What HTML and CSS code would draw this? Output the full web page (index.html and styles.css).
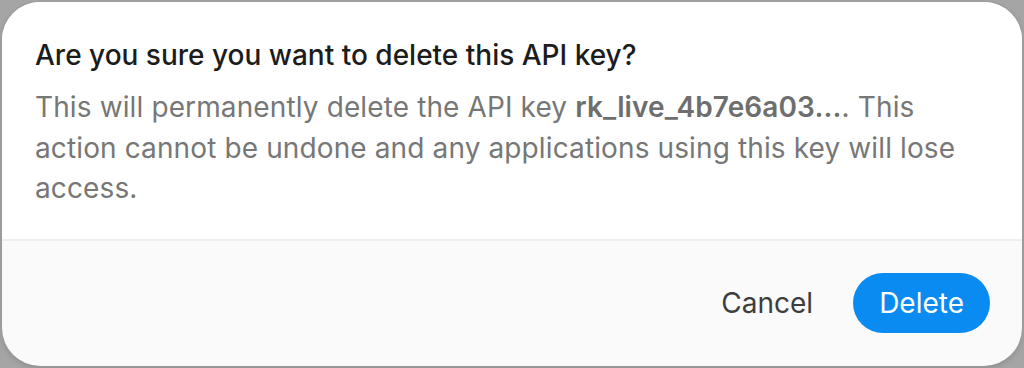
FILE: index.html
```html
<!DOCTYPE html>
<html lang="en">
<head>
    <meta charset="UTF-8">
    <meta name="viewport" content="width=device-width, initial-scale=1.0">
    <title>Delete API key</title>
    <link rel="stylesheet" href="styles.css">
</head>
<body>
    <div class="dialog" role="alertdialog" aria-labelledby="dialog-title">
        <div class="dialog-body">
            <h2 id="dialog-title">Are you sure you want to delete this API key?</h2>
            <p class="dialog-text">This will permanently delete the API key <strong>rk_live_4b7e6a03...</strong>. This action cannot be undone and any applications using this key will lose access.</p>
        </div>
        <div class="dialog-footer">
            <button class="btn btn-cancel" type="button">Cancel</button>
            <button class="btn btn-delete" type="button">Delete</button>
        </div>
    </div>
</body>
</html>
```

FILE: styles.css
```css
body {
    margin: 0;
    padding: 2px;
    height: 368px;
    box-sizing: border-box;
    background-color: #a5a5a5;
    font-family: Inter, "Noto Sans", sans-serif;
    overflow: hidden;
}
.dialog {
    height: 100%;
    display: flex;
    flex-direction: column;
    background-color: #fafafa;
    border-radius: 38px;
    overflow: hidden;
    box-shadow: 0 2px 6px rgba(0, 0, 0, 0.15);
}
.dialog-body {
    background-color: #fff;
    padding: 36px 34px 30px 33px;
    border-bottom: 2px solid #eeeeee;
}
.dialog-body h2 {
    margin: 0 0 15px;
    font-size: 28px;
    font-weight: 500;
    line-height: 34px;
    color: #1c1c1c;
}
.dialog-text {
    margin: 0;
    font-size: 28px;
    line-height: 40.5px;
    letter-spacing: 0.12px;
    color: #777;
}
.dialog-text strong {
    font-weight: 600;
    color: #6e6e6e;
}
.dialog-footer {
    flex: 1;
    display: flex;
    justify-content: flex-end;
    align-items: center;
    gap: 14px;
    padding: 0 32px;
}
.btn {
    border: none;
    font-family: inherit;
    font-size: 28px;
    height: 60px;
    padding: 0 26px;
    border-radius: 30px;
    cursor: pointer;
}
.btn-cancel {
    background: none;
    color: #3d3d3d;
}
.btn-delete {
    background-color: #0a8bf2;
    color: #fff;
}
```
